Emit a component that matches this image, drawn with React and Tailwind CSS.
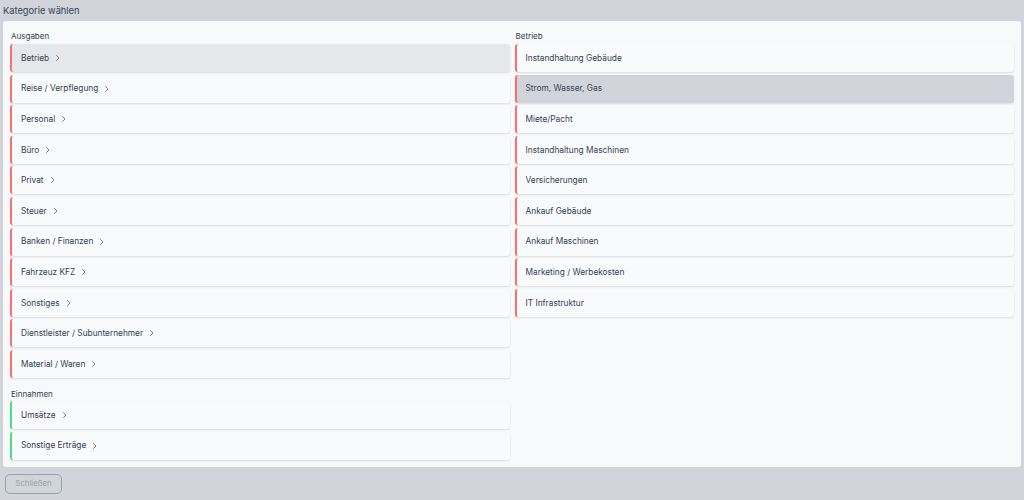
import React from "react";

const Chevron = () => (
  <svg width="8" height="8" viewBox="0 0 8 8" className="ml-[5px] text-gray-500" fill="none" stroke="currentColor" strokeWidth="0.9" strokeLinecap="round" strokeLinejoin="round">
    <path d="M2.5 1.5 L5 4 L2.5 6.5" />
  </svg>
);

const Item = ({ label, chevron, color = "red", active }) => (
  <div
    className={`h-[28px] flex items-center pl-[9px] rounded-[3px] border-l-2 shadow-[0_1px_2px_rgba(0,0,0,0.12)] text-[8.3px] text-gray-700 ${
      color === "green" ? "border-l-[#4ade80]" : "border-l-[#f87171]"
    } ${active === 1 ? "bg-[#e5e7eb]" : active === 2 ? "bg-[#d1d5db]" : "bg-[#f9fafb]"}`}
  >
    <span>{label}</span>
    {chevron && <Chevron />}
  </div>
);

export default function App() {
  const ausgaben = [
    "Betrieb",
    "Reise / Verpflegung",
    "Personal",
    "Büro",
    "Privat",
    "Steuer",
    "Banken / Finanzen",
    "Fahrzeuz KFZ",
    "Sonstiges",
    "Dienstleister / Subunternehmer",
    "Material / Waren",
  ];
  const betrieb = [
    "Instandhaltung Gebäude",
    "Strom, Wasser, Gas",
    "Miete/Pacht",
    "Instandhaltung Maschinen",
    "Versicherungen",
    "Ankauf Gebäude",
    "Ankauf Maschinen",
    "Marketing / Werbekosten",
    "IT Infrastruktur",
  ];
  return (
    <div className="w-[1024px] h-[500px] bg-[#d1d5db] font-['Inter',sans-serif] flex flex-col" >
      <div className="h-[21px] pl-[3px] flex items-center text-[9.3px] text-gray-700">Kategorie wählen</div>
      <div className="mx-[3px] h-[446px] bg-[#f8f9fb] rounded-[3px] pl-[7px] pr-[7px] flex gap-[5px]">
        <div className="flex-1 flex flex-col">
          <div className="h-[23px] pt-[9px] pl-[1px] text-[8px] text-gray-700">Ausgaben</div>
          <div className="flex flex-col gap-[2.6px]">
            {ausgaben.map((l, i) => (
              <Item key={l} label={l} chevron active={i === 0 ? 1 : 0} />
            ))}
          </div>
          <div className="h-[23px] pt-[10px] pl-[1px] text-[8px] text-gray-700">Einnahmen</div>
          <div className="flex flex-col gap-[2.6px]">
            <Item label="Umsätze" chevron color="green" />
            <Item label="Sonstige Erträge" chevron color="green" />
          </div>
        </div>
        <div className="flex-1 flex flex-col">
          <div className="h-[23px] pt-[9px] pl-[1px] text-[8px] text-gray-700">Betrieb</div>
          <div className="flex flex-col gap-[2.6px]">
            {betrieb.map((l, i) => (
              <Item key={l} label={l} active={i === 1 ? 2 : 0} />
            ))}
          </div>
        </div>
      </div>
      <div className="flex-1 flex items-center pl-[5px]">
        <button className="w-[57px] h-[20px] rounded-[5px] border border-gray-400 text-[7.8px] text-gray-400 bg-transparent">
          Schließen
        </button>
      </div>
    </div>
  );
}
